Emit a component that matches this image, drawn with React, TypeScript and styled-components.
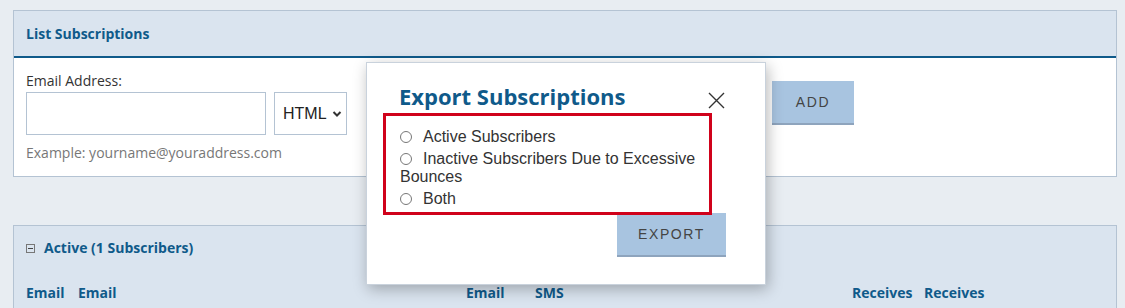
import styled, { createGlobalStyle } from 'styled-components';

const GlobalStyle = createGlobalStyle`
  html, body {
    margin: 0;
    padding: 0;
    background: #e8edf2;
    font-family: "Open Sans", Lato, sans-serif;
    color: #333;
  }
  * { box-sizing: border-box; }
`;

const colors = {
  page: '#e8edf2',
  header: '#dae4ef',
  border: '#b4c3d3',
  navy: '#0f5a8a',
  button: '#a8c4e0',
  buttonEdge: '#8ea4bd',
  red: '#d0021b',
};

export default function App() {
  return (
    <>
      <GlobalStyle />
      <Page>
        <Panel>
          <PanelHeader>List Subscriptions</PanelHeader>
          <PanelBody>
            <FieldGroup>
              <FieldLabel>Email Address:</FieldLabel>
              <InputRow>
                <EmailInput type="text" />
                <FormatSelect>
                  HTML
                  <svg width="10" height="8" viewBox="0 0 10 8">
                    <path d="M1.5 2 L5 5.5 L8.5 2" fill="none" stroke="#333" strokeWidth="2" />
                  </svg>
                </FormatSelect>
              </InputRow>
              <Hint>Example: yourname@youraddress.com</Hint>
            </FieldGroup>
            <AddButton>ADD</AddButton>
          </PanelBody>
        </Panel>

        <ListPanel>
          <GroupTitle>
            <CollapseIcon />
            Active (1 Subscribers)
          </GroupTitle>
          <ColumnRow>
            <span>Email</span>
            <span>Email</span>
            <span>Email</span>
            <span>SMS</span>
            <span>Receives</span>
            <span>Receives</span>
          </ColumnRow>
        </ListPanel>

        <Modal>
          <ModalTitle>Export Subscriptions</ModalTitle>
          <CloseButton aria-label="Close">
            <svg width="17" height="17" viewBox="0 0 17 17">
              <path d="M1 1 L16 16 M16 1 L1 16" stroke="#333" strokeWidth="1.4" />
            </svg>
          </CloseButton>
          <OptionBox>
            <Option><Radio />Active Subscribers</Option>
            <Option><Radio />Inactive Subscribers Due to Excessive Bounces</Option>
            <Option><Radio />Both</Option>
          </OptionBox>
          <ModalFooter>
            <ActionButton $width={109}>EXPORT</ActionButton>
          </ModalFooter>
        </Modal>
      </Page>
    </>
  );
}

const Page = styled.div`
  position: relative;
  height: 308px;
  overflow: hidden;
  padding: 10px 8px 0 13px;
`;

const Panel = styled.section`
  border: 1px solid ${colors.border};
  background: #fff;
`;

const PanelHeader = styled.div`
  display: flex;
  align-items: center;
  height: 47px;
  padding: 0 12px;
  background: ${colors.header};
  border-bottom: 2px solid ${colors.navy};
  font-size: 14px;
  font-weight: 700;
  color: ${colors.navy};
`;

const PanelBody = styled.div`
  display: flex;
  align-items: flex-start;
  padding: 13px 12px 13px;
`;

const FieldGroup = styled.div`
  display: flex;
  flex-direction: column;
`;

const FieldLabel = styled.label`
  font-size: 14px;
  line-height: 20px;
  margin-bottom: 1px;
  color: #333;
`;

const InputRow = styled.div`
  display: flex;
  gap: 8px;
`;

const EmailInput = styled.input`
  width: 240px;
  height: 43px;
  border: 1px solid ${colors.border};
  background: #fff;
  outline: none;
`;

const FormatSelect = styled.div`
  display: flex;
  align-items: center;
  gap: 5px;
  width: 73px;
  height: 43px;
  padding: 0 0 0 8px;
  border: 1px solid ${colors.border};
  background: #fff;
  font-family: "Liberation Sans", Arial, sans-serif;
  font-size: 16px;
  color: #222;
`;

const Hint = styled.div`
  margin-top: 8px;
  font-size: 14px;
  line-height: 20px;
  color: #777;
`;

const ActionButton = styled.button<{ $width: number }>`
  width: ${({ $width }) => $width}px;
  height: 44px;
  padding: 0;
  border: none;
  border-bottom: 2px solid ${colors.buttonEdge};
  background: ${colors.button};
  font-family: "Liberation Sans", Arial, sans-serif;
  font-size: 14px;
  letter-spacing: 1.6px;
  color: #444;
  cursor: pointer;
`;

const AddButton = styled(ActionButton).attrs({ $width: 82 })`
  margin-left: 425px;
  margin-top: 10px;
`;

const ListPanel = styled.section`
  margin-top: 48px;
  height: 100px;
  border: 1px solid ${colors.border};
  background: ${colors.header};
  padding: 12px 12px 0;
`;

const GroupTitle = styled.div`
  display: flex;
  align-items: center;
  gap: 9px;
  font-size: 14px;
  line-height: 20px;
  font-weight: 700;
  color: ${colors.navy};
`;

const CollapseIcon = styled.span`
  position: relative;
  display: inline-block;
  width: 9px;
  height: 9px;
  border: 1px solid #777;
  &::after {
    content: '';
    position: absolute;
    left: 1px;
    right: 1px;
    top: 3px;
    height: 1px;
    background: #444;
  }
`;

const ColumnRow = styled.div`
  display: grid;
  grid-template-columns: 52px 388px 69px 317px 72px auto;
  margin-top: 25px;
  font-size: 14px;
  line-height: 20px;
  font-weight: 700;
  color: ${colors.navy};
`;

const Modal = styled.div`
  position: absolute;
  left: 366px;
  top: 62px;
  width: 400px;
  height: 223px;
  padding: 19px 39px 0 16px;
  background: #fff;
  border: 1px solid #c9d2dc;
  box-shadow: 2px 4px 14px rgba(0, 0, 0, 0.28);
`;

const ModalTitle = styled.h2`
  margin: 0 0 0 16px;
  font-size: 22px;
  line-height: 29px;
  font-weight: 700;
  color: ${colors.navy};
`;

const CloseButton = styled.button`
  position: absolute;
  top: 29px;
  right: 40px;
  padding: 0;
  border: none;
  background: none;
  line-height: 0;
  cursor: pointer;
`;

const OptionBox = styled.div`
  position: relative;
  z-index: 1;
  width: 329px;
  margin-top: 2px;
  margin-bottom: -2px;
  padding: 12px 5px 4px 14px;
  border: 3px solid ${colors.red};
  font-family: "Liberation Sans", Arial, sans-serif;
  font-size: 16px;
  line-height: 18px;
  color: #333;
`;

const Option = styled.div`
  & + & {
    margin-top: 4px;
  }
`;

const Radio = styled.span`
  display: inline-block;
  width: 12px;
  height: 12px;
  margin-right: 11px;
  border: 1px solid #777;
  border-radius: 50%;
  vertical-align: -1px;
`;

const ModalFooter = styled.div`
  display: flex;
  justify-content: flex-end;
`;
